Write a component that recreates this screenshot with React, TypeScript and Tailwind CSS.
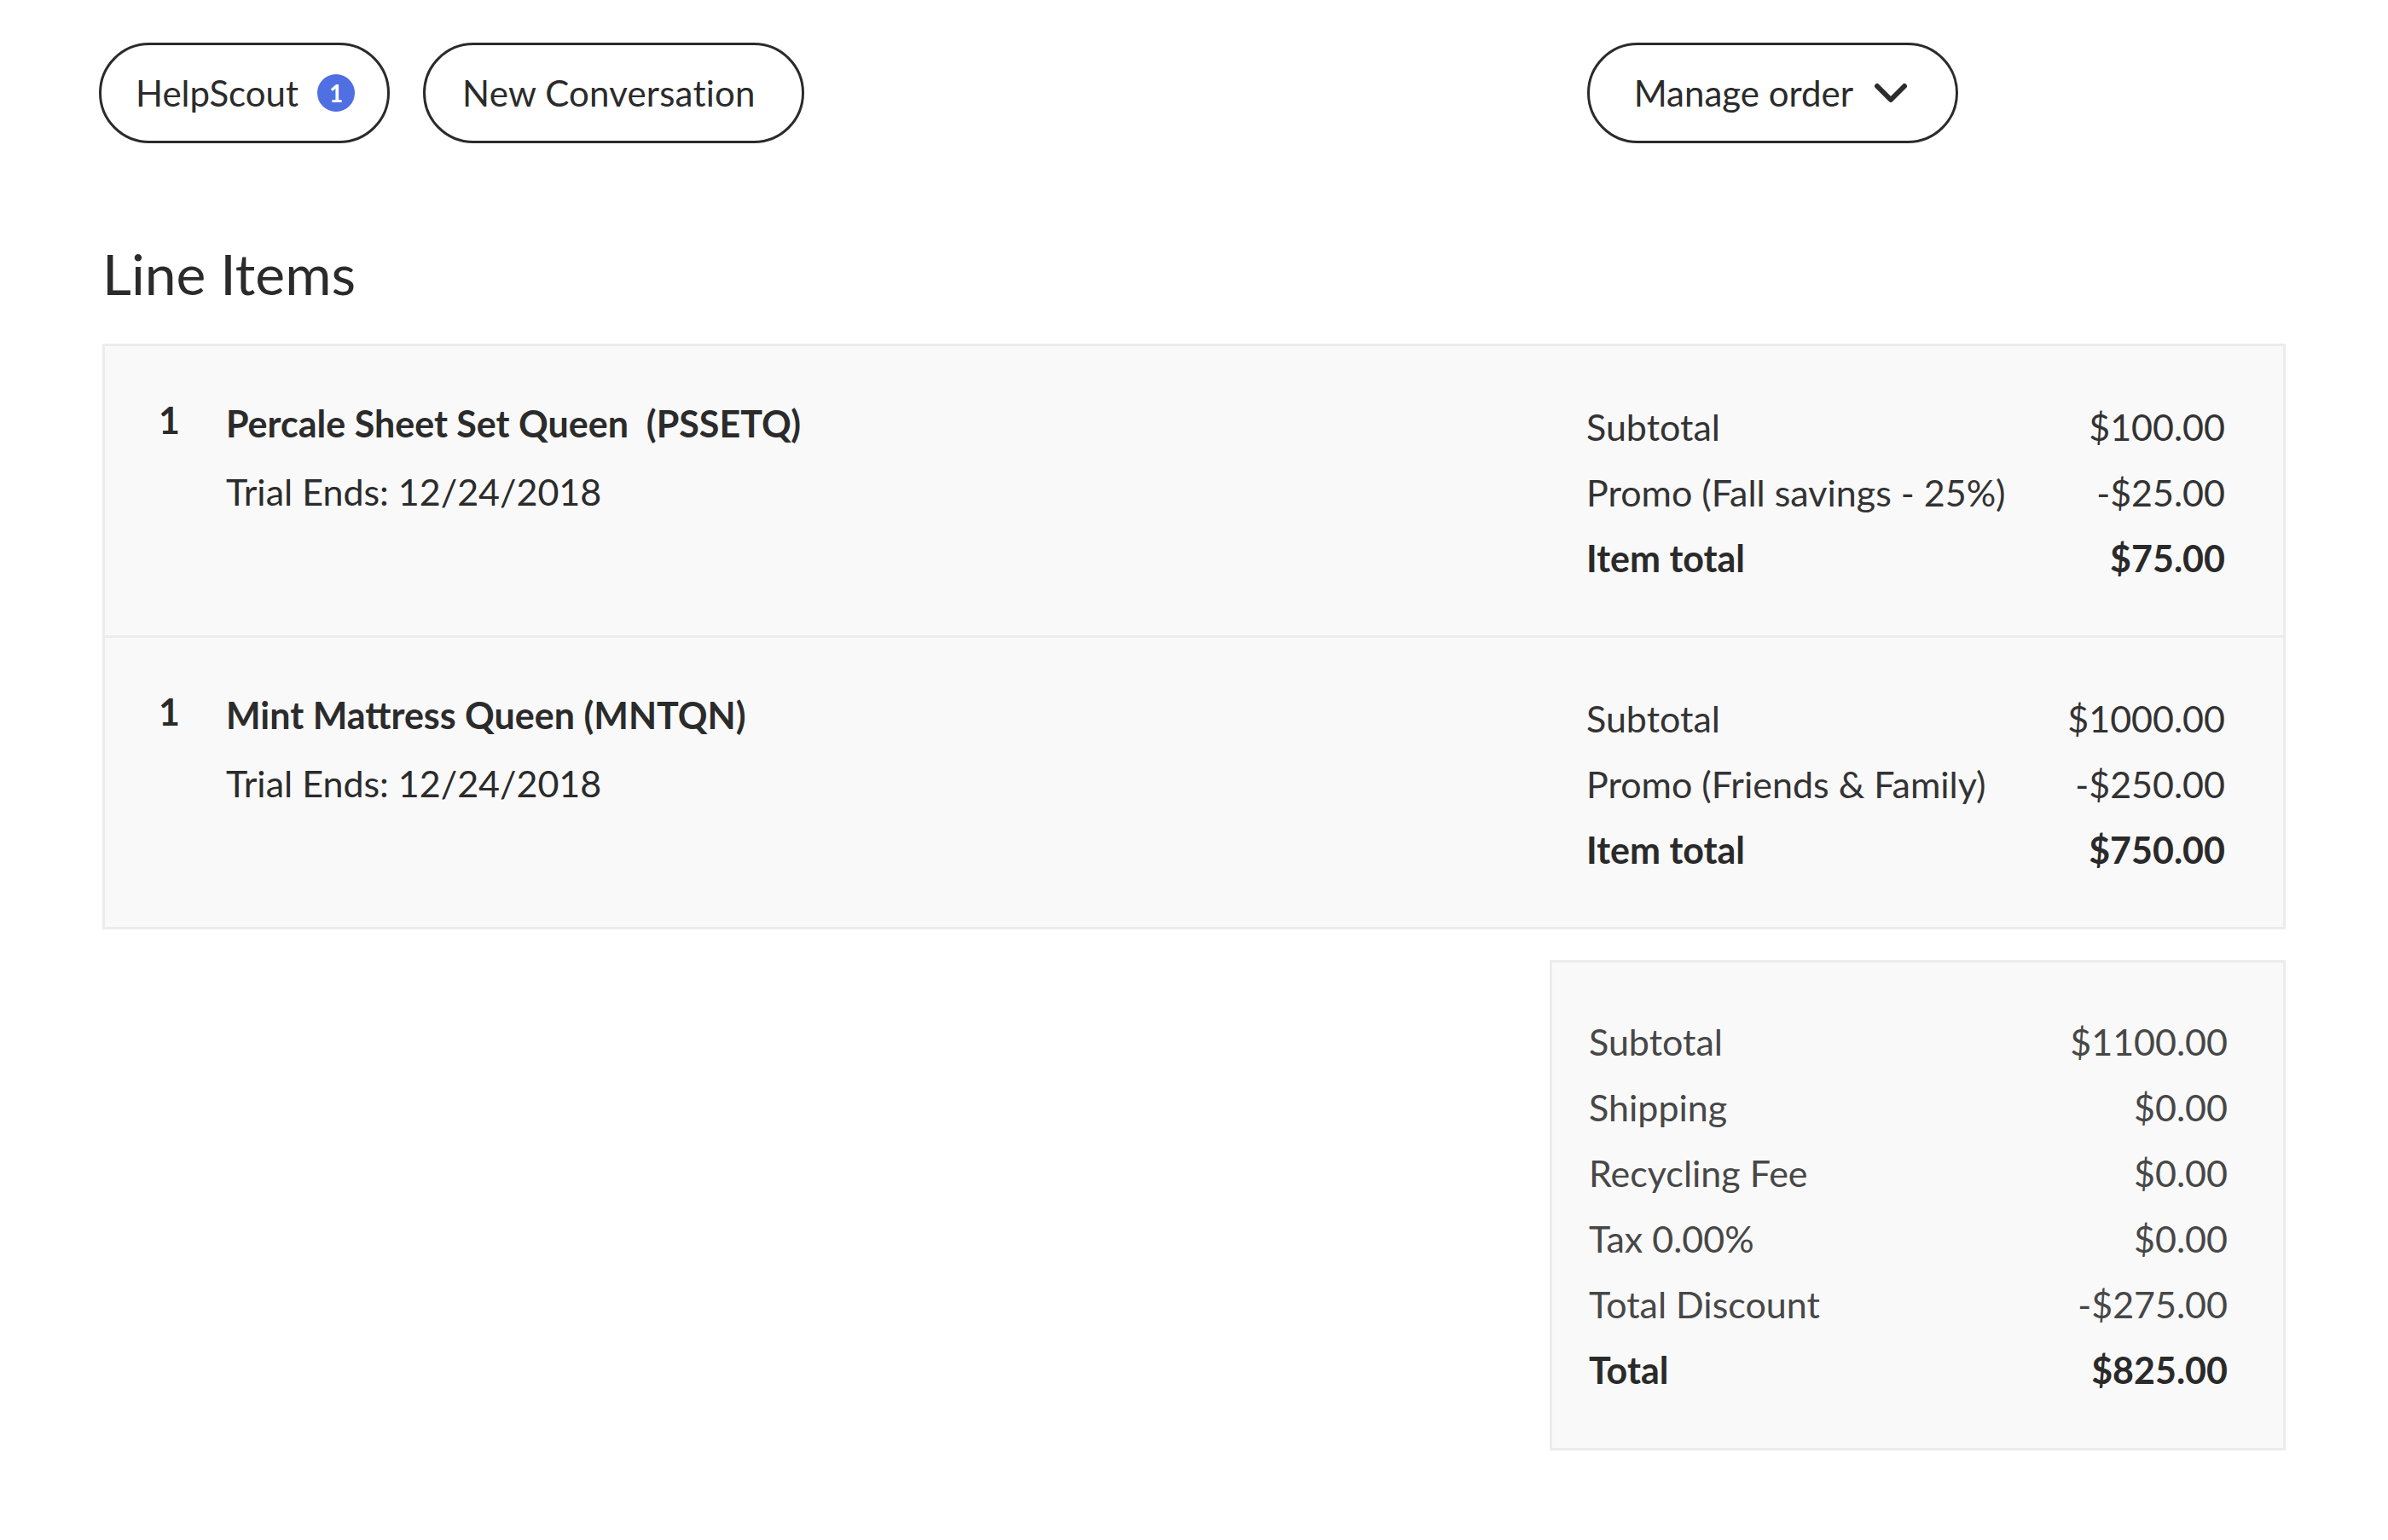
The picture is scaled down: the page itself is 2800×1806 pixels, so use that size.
import React from "react";

const font = { fontFamily: "Lato, 'Open Sans', sans-serif" };

function Row({ label, value, bold }: { label: string; value: string; bold?: boolean }) {
  return (
    <div className={`flex justify-between items-center h-[77px] ${bold ? "font-bold text-[#2a2a2a]" : ""}`}>
      <span>{label}</span>
      <span>{value}</span>
    </div>
  );
}

function Item({
  qty,
  name,
  trial,
  rows,
  last,
}: {
  qty: string;
  name: string;
  trial: string;
  rows: { label: string; value: string; bold?: boolean }[];
  last?: boolean;
}) {
  return (
    <div className={`flex pl-[63px] pr-[68px] pt-[57px] pb-[51px] ${last ? "" : "border-b-[3px] border-[#ececec]"}`}>
      <div className="flex flex-1">
        <div className="w-[79px] font-bold h-[77px] flex items-center -mt-[8px]">{qty}</div>
        <div className="flex flex-col">
          <div className="font-bold h-[77px] flex items-center whitespace-pre -mt-[4px]">{name}</div>
          <div className="h-[77px] flex items-center mt-[3px]">{trial}</div>
        </div>
      </div>
      <div className="w-[749px] text-[#333]">
        {rows.map((r) => (
          <Row key={r.label} {...r} />
        ))}
      </div>
    </div>
  );
}

export default function App() {
  return (
    <div className="min-h-[1806px] bg-white text-[#2b2b2b] text-[43px] px-[120px]" style={font}>
      <div className="flex items-center pt-[50px] h-[168px] relative">
        <button className="-ml-[4px] h-[118px] pl-[40px] pr-[38px] rounded-full border-[3px] border-[#2b2b2b] flex items-center gap-[22px] text-[42px]">
          <span>HelpScout</span>
          <span className="w-[44px] h-[44px] rounded-full bg-[#4f6fe3] text-white text-[28px] font-bold flex items-center justify-center">1</span>
        </button>
        <button className="ml-[39px] h-[118px] pl-[43px] pr-[54px] rounded-full border-[3px] border-[#2b2b2b] flex items-center text-[42px] tracking-[0.2px]">
          New Conversation
        </button>
        <div className="flex-1" />
        <button className="mr-[384px] h-[118px] pl-[52px] pr-[56px] rounded-full border-[3px] border-[#2b2b2b] flex items-center gap-[24px] text-[42px]">
          <span>Manage order</span>
          <svg width="40" height="28" viewBox="0 0 40 28" fill="none">
            <path d="M4 6 L20 22 L36 6" stroke="#2b2b2b" strokeWidth="6" strokeLinecap="round" strokeLinejoin="round" />
          </svg>
        </button>
      </div>

      <h1 className="mt-[113px] text-[66px] leading-[80px] font-normal text-[#2b2b2b]">Line Items</h1>

      <div className="mt-[42px] bg-[#f9f9f9] border-[3px] border-[#ececec]">
        <Item
          qty="1"
          name="Percale Sheet Set Queen  (PSSETQ)"
          trial="Trial Ends: 12/24/2018"
          rows={[
            { label: "Subtotal", value: "$100.00" },
            { label: "Promo (Fall savings - 25%)", value: "-$25.00" },
            { label: "Item total", value: "$75.00", bold: true },
          ]}
        />
        <Item
          qty="1"
          name="Mint Mattress Queen (MNTQN)"
          trial="Trial Ends: 12/24/2018"
          last
          rows={[
            { label: "Subtotal", value: "$1000.00" },
            { label: "Promo (Friends & Family)", value: "-$250.00" },
            { label: "Item total", value: "$750.00", bold: true },
          ]}
        />
      </div>

      <div className="flex justify-end mt-[36px]">
        <div className="w-[863px] bg-[#f9f9f9] border-[3px] border-[#ececec] pl-[43px] pr-[65px] pt-[55px] pb-[52px] text-[#474747]">
          <Row label="Subtotal" value="$1100.00" />
          <Row label="Shipping" value="$0.00" />
          <Row label="Recycling Fee" value="$0.00" />
          <Row label="Tax 0.00%" value="$0.00" />
          <Row label="Total Discount" value="-$275.00" />
          <Row label="Total" value="$825.00" bold />
        </div>
      </div>
    </div>
  );
}
